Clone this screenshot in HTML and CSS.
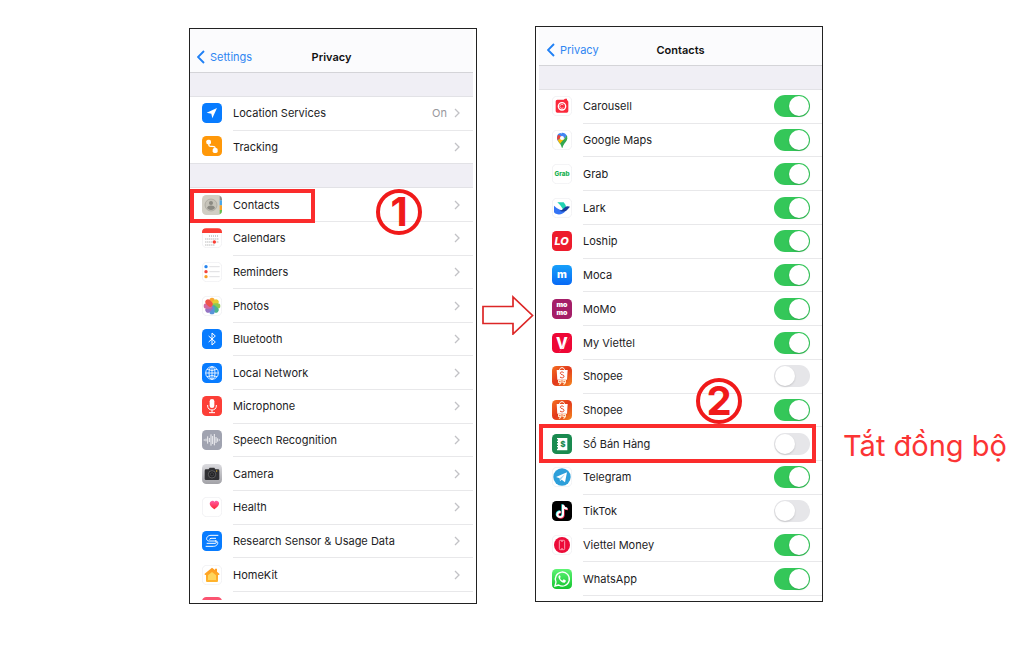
FILE: index.html
```html
<!DOCTYPE html>
<html lang="vi">
<head>
  <meta charset="UTF-8" />
  <meta name="viewport" content="width=device-width, initial-scale=1" />
  <title>Tắt đồng bộ danh bạ</title>
  <link rel="stylesheet" href="styles.css">
</head>
<body>

  <!-- Shared shapes -->
  <svg class="defs" width="0" height="0" aria-hidden="true">
    <defs>
      <linearGradient id="shopeeBg" x1="0" y1="0" x2="1" y2="1">
        <stop offset="0" stop-color="#f5701f" /><stop offset="0.5" stop-color="#e2381c" /><stop offset="1" stop-color="#f58a20" />
      </linearGradient>
      <linearGradient id="grayBg" x1="0" y1="0" x2="0" y2="1">
        <stop offset="0" stop-color="#dcdce0" /><stop offset="1" stop-color="#a2a2a7" />
      </linearGradient>
      <linearGradient id="mocaBg" x1="0" y1="0" x2="0" y2="1">
        <stop offset="0" stop-color="#17a0fa" /><stop offset="1" stop-color="#0869f5" />
      </linearGradient>
      <linearGradient id="waBg" x1="0" y1="0" x2="0" y2="1">
        <stop offset="0" stop-color="#5ff475" /><stop offset="1" stop-color="#13c42e" />
      </linearGradient>
      <linearGradient id="heart" x1="0" y1="0" x2="0" y2="1">
        <stop offset="0" stop-color="#ff5fa8" /><stop offset="1" stop-color="#ff2432" />
      </linearGradient>
      <linearGradient id="home" x1="0" y1="0" x2="0" y2="1">
        <stop offset="0" stop-color="#ff9a1f" /><stop offset="1" stop-color="#ffb52e" />
      </linearGradient>
    </defs>
    <symbol id="chevron" viewBox="0 0 6 10">
      <path d="M1 1l4 4-4 4" fill="none" stroke="#c2c2c6" stroke-width="1.3" />
    </symbol>
    <symbol id="back" viewBox="0 0 9 14">
      <path d="M7 1L1 7l6 6" fill="none" stroke="#2080f5" stroke-width="1.9" />
    </symbol>
    <symbol id="plate" viewBox="0 0 60 60">
      <rect x="1" y="1" width="58" height="58" rx="13" fill="#fff" stroke="#ececee" stroke-width="2" />
    </symbol>
    <symbol id="shopee" viewBox="0 0 60 60">
      <rect width="60" height="60" rx="13" fill="url(#shopeeBg)" />
      <path d="M22 14c0-12 16-12 16 0" fill="none" stroke="#fff" stroke-width="3" />
      <path d="M14 12h33l-2 29H16z" fill="#fff" />
      <path d="M35 20c-4-4-11-2-10 2 1 5 11 3 11 9 0 5-8 6-12 2" fill="none" stroke="#e8401f" stroke-width="3" />
      <path d="M18 42h11v8l-5 6h-4l3-5h-5zm13 0h11v8l-5 6h-4l3-5h-5z" fill="#ffe6c9" />
      <path d="M22 45h3v3h-3zm13 0h3v3h-3z" fill="#e8401f" />
    </symbol>
  </svg>

  <main class="guide">

    <section class="phone phone-privacy">
      <header class="bar">
        <a href="#" class="back"><svg width="9" height="14"><use href="#back" /></svg>Settings</a>
        <h1>Privacy</h1>
      </header>
      <ul class="list">
        <li class="spacer"></li>
        <li class="row"><a href="#">
          <svg class="icon" viewBox="0 0 60 60"><rect width="60" height="60" rx="13" fill="#087cff" /><path d="M45 15L31 46l-3-14-14-3z" fill="#fff" /></svg>
          <span class="body"><span class="label">Location Services</span><span class="value">On</span><svg class="chevron"><use href="#chevron" /></svg></span>
        </a></li>
        <li class="row last"><a href="#">
          <svg class="icon" viewBox="0 0 60 60"><rect width="60" height="60" rx="13" fill="#ff9809" /><path d="M20 18c0 15 2 13 10 13s10 0 10 13" fill="none" stroke="#fff" stroke-width="4" /><rect x="13" y="11" width="14" height="14" rx="5" fill="#fff" /><rect x="32" y="36" width="15" height="15" rx="5" fill="#fff" /></svg>
          <span class="body"><span class="label">Tracking</span><svg class="chevron"><use href="#chevron" /></svg></span>
        </a></li>
        <li class="spacer"></li>
        <li class="row marked"><a href="#">
          <svg class="icon" viewBox="0 0 60 60"><rect width="60" height="60" rx="13" fill="#d1cec4" /><path d="M53 2q7 4 7 11v3h-7z" fill="#8d8d8d" /><path d="M53 16h7v15h-7z" fill="#4aa7e8" /><path d="M53 31h7v14h-7z" fill="#f5a22c" /><path d="M53 45h7v3q0 7-7 10z" fill="#67bd4d" /><circle cx="27" cy="30" r="18" fill="#c6c3b9" stroke="#a5a299" stroke-width="2" /><circle cx="27" cy="24" r="6" fill="#8b8982" /><path d="M15 39c2-10 22-10 24 0-6 8-18 8-24 0z" fill="#8b8982" /></svg>
          <span class="body"><span class="label">Contacts</span><svg class="chevron"><use href="#chevron" /></svg></span>
        </a></li>
        <li class="row"><a href="#">
          <svg class="icon" viewBox="0 0 60 60"><use href="#plate" /><path d="M0 15V13Q0 1 13 1h34q13 0 13 12v2z" fill="#fb3d34" /><path d="M21 24h30M10 33h42M10 42h42M10 51h30" fill="none" stroke="#666" stroke-width="2" stroke-dasharray="3 3" /><circle cx="37" cy="42" r="5" fill="#fb3d34" /></svg>
          <span class="body"><span class="label">Calendars</span><svg class="chevron"><use href="#chevron" /></svg></span>
        </a></li>
        <li class="row"><a href="#">
          <svg class="icon" viewBox="0 0 60 60"><use href="#plate" /><circle cx="12" cy="14" r="5" fill="#2584ee" /><circle cx="12" cy="29" r="5" fill="#f3453c" /><circle cx="12" cy="44" r="5" fill="#f8a128" /><path d="M22 14h31M22 29h31M22 44h31" stroke="#cfcfd2" stroke-width="2" /></svg>
          <span class="body"><span class="label">Reminders</span><svg class="chevron"><use href="#chevron" /></svg></span>
        </a></li>
        <li class="row"><a href="#">
          <svg class="icon" viewBox="0 0 60 60"><use href="#plate" />
            <g opacity="0.9">
              <rect x="22" y="5" width="16" height="25" rx="8" fill="#f9a01f" />
              <rect x="22" y="5" width="16" height="25" rx="8" fill="#e3c91d" transform="rotate(45 30 30)" />
              <rect x="22" y="5" width="16" height="25" rx="8" fill="#83c341" transform="rotate(90 30 30)" />
              <rect x="22" y="5" width="16" height="25" rx="8" fill="#38ad83" transform="rotate(135 30 30)" />
              <rect x="22" y="5" width="16" height="25" rx="8" fill="#4688d8" transform="rotate(180 30 30)" />
              <rect x="22" y="5" width="16" height="25" rx="8" fill="#8a65bd" transform="rotate(225 30 30)" />
              <rect x="22" y="5" width="16" height="25" rx="8" fill="#cf5b99" transform="rotate(270 30 30)" />
              <rect x="22" y="5" width="16" height="25" rx="8" fill="#ee4338" transform="rotate(315 30 30)" />
            </g>
          </svg>
          <span class="body"><span class="label">Photos</span><svg class="chevron"><use href="#chevron" /></svg></span>
        </a></li>
        <li class="row"><a href="#">
          <svg class="icon" viewBox="0 0 60 60"><rect width="60" height="60" rx="13" fill="#087cff" /><path d="M20 21l20 18-10 9V12l10 9-20 18" fill="none" stroke="#fff" stroke-width="3" /></svg>
          <span class="body"><span class="label">Bluetooth</span><svg class="chevron"><use href="#chevron" /></svg></span>
        </a></li>
        <li class="row"><a href="#">
          <svg class="icon" viewBox="0 0 60 60"><rect width="60" height="60" rx="13" fill="#087cff" /><g fill="none" stroke="#fff" stroke-width="2.5"><circle cx="30" cy="30" r="19" /><ellipse cx="30" cy="30" rx="9" ry="19" /><path d="M11 30h38M30 11v38M15 19q15 7 30 0M15 41q15-7 30 0" /></g></svg>
          <span class="body"><span class="label">Local Network</span><svg class="chevron"><use href="#chevron" /></svg></span>
        </a></li>
        <li class="row"><a href="#">
          <svg class="icon" viewBox="0 0 60 60"><rect width="60" height="60" rx="13" fill="#fc3f37" /><rect x="23" y="9" width="14" height="27" rx="7" fill="#fff" /><path d="M17 27v3c0 16 26 16 26 0v-3M30 42v8M21 50h18" fill="none" stroke="#fff" stroke-width="3" /></svg>
          <span class="body"><span class="label">Microphone</span><svg class="chevron"><use href="#chevron" /></svg></span>
        </a></li>
        <li class="row"><a href="#">
          <svg class="icon" viewBox="0 0 60 60"><rect width="60" height="60" rx="13" fill="#a0a3b0" /><path d="M5 30h4M12 26v8M17 19v22M22 24v12M27 13v34M32 18v24M37 12v34M42 21v18M47 25v10M52 28v4" stroke="#fff" stroke-width="2.5" /></svg>
          <span class="body"><span class="label">Speech Recognition</span><svg class="chevron"><use href="#chevron" /></svg></span>
        </a></li>
        <li class="row"><a href="#">
          <svg class="icon" viewBox="0 0 60 60"><rect width="60" height="60" rx="13" fill="url(#grayBg)" /><path d="M8 20q0-4 4-4h8l3-5h14l3 5h8q4 0 4 4v24q0 4-4 4H12q-4 0-4-4z" fill="#303033" /><circle cx="30" cy="31" r="11" fill="#202023" stroke="#777" stroke-width="2" /><circle cx="30" cy="31" r="5" fill="none" stroke="#555" stroke-width="2" /><circle cx="44" cy="21" r="2" fill="#e2b52d" /></svg>
          <span class="body"><span class="label">Camera</span><svg class="chevron"><use href="#chevron" /></svg></span>
        </a></li>
        <li class="row"><a href="#">
          <svg class="icon" viewBox="0 0 60 60"><use href="#plate" /><path d="M37 37C15 22 24 11 32 11q4 0 5 4 1-4 6-4c8 0 16 11-6 26z" fill="url(#heart)" /></svg>
          <span class="body"><span class="label">Health</span><svg class="chevron"><use href="#chevron" /></svg></span>
        </a></li>
        <li class="row"><a href="#">
          <svg class="icon" viewBox="0 0 60 60"><rect width="60" height="60" rx="13" fill="#087cff" /><g fill="none" stroke="#fff" stroke-width="3"><path d="M49 13H27c-15 0-18 17-5 17h17c6 0 6 7 0 7H14" /><path d="M42 22H27q-4 0-4 4M11 46h23c15 0 18-17 5-17" /></g></svg>
          <span class="body"><span class="label">Research Sensor &amp; Usage Data</span><svg class="chevron"><use href="#chevron" /></svg></span>
        </a></li>
        <li class="row"><a href="#">
          <svg class="icon" viewBox="0 0 60 60"><use href="#plate" /><path d="M30 8l9 7v-4h6v9l7 6q2 4-3 4h-1v18q0 3-3 3H15q-3 0-3-3V30h-1q-5 0-3-4z" fill="url(#home)" /><path d="M30 21l12 10v14H18V31z" fill="#ffd55c" /></svg>
          <span class="body"><span class="label">HomeKit</span><svg class="chevron"><use href="#chevron" /></svg></span>
        </a></li>
        <li class="peek"><svg class="icon" viewBox="0 0 60 60"><rect width="60" height="60" rx="13" fill="#fb5471" /></svg></li>
      </ul>
      <span class="step step-one">1</span>
    </section>

    <svg class="arrow" width="54" height="40" viewBox="0 0 54 40" aria-hidden="true">
      <path d="M2 11.500H32V2L51.500 20.500 32 39V28.500H2z" fill="#fff" stroke="#dc2626" stroke-width="1.700" />
    </svg>

    <section class="phone phone-contacts">
      <header class="bar">
        <a href="#" class="back"><svg width="9" height="14"><use href="#back" /></svg>Privacy</a>
        <h1>Contacts</h1>
      </header>
      <ul class="list">
        <li class="spacer"></li>
        <li class="row"><label>
          <svg class="icon" viewBox="0 0 60 60"><use href="#plate" /><path d="M16 11h19l4-3h6v5q4 1 4 5v27q0 5-5 5H16q-5 0-5-5V16q0-5 5-5z" fill="#fb283b" /><circle cx="30" cy="31" r="11" fill="none" stroke="#fff" stroke-width="4" /><path d="M34 27a6 6 0 1 0 0 8" fill="none" stroke="#ffc3c7" stroke-width="3" /></svg>
          <span class="body"><span class="label">Carousell</span><input type="checkbox" class="switch" checked></span>
        </label></li>
        <li class="row"><label>
          <svg class="icon" viewBox="0 0 60 60"><use href="#plate" /><path d="M19 35c4 5 8 8 10 17 0 3 3 3 3 0 2-11 13-16 14-28z" fill="#34a853" /><path d="M15 21q-1 8 5 15l18-20-13-7Q16 11 15 21z" fill="#4285f4" /><path d="M18 14q-5 8-1 17l12-12z" fill="#ea4335" /><path d="M17 31l7 10 20-24-14 5z" fill="#fbbc04" /><path d="M44 15q5 10-3 18L30 46q2-12 14-31z" fill="#34a853" /><path d="M29 8q11-1 15 9l-9 10-7-10z" fill="#4285f4" /><circle cx="30" cy="24" r="6" fill="#fff" /></svg>
          <span class="body"><span class="label">Google Maps</span><input type="checkbox" class="switch" checked></span>
        </label></li>
        <li class="row"><label>
          <svg class="icon" viewBox="0 0 60 60" aria-hidden="true"><use href="#plate" /><text class="logo-text" x="30" y="37" font-size="19" fill="#16b150">Grab</text></svg>
          <span class="body"><span class="label">Grab</span><input type="checkbox" class="switch" checked></span>
        </label></li>
        <li class="row"><label>
          <svg class="icon" viewBox="0 0 60 60"><use href="#plate" /><path d="M16 13h19q7 7 7 16l-9 5Q26 21 16 13z" fill="#20d2b2" /><path d="M6 23q15 15 35 15Q31 51 17 49 8 47 6 43z" fill="#3474f5" /><path d="M54 26q-9-4-17 3-7 8-14 9 17 7 25-5z" fill="#153c9c" /></svg>
          <span class="body"><span class="label">Lark</span><input type="checkbox" class="switch" checked></span>
        </label></li>
        <li class="row"><label>
          <svg class="icon" viewBox="0 0 60 60" aria-hidden="true"><rect width="60" height="60" rx="13" fill="#ed1c2c" /><text class="logo-text slanted" x="29" y="43" font-size="33" fill="#fff">LO</text></svg>
          <span class="body"><span class="label">Loship</span><input type="checkbox" class="switch" checked></span>
        </label></li>
        <li class="row"><label>
          <svg class="icon" viewBox="0 0 60 60" aria-hidden="true"><rect width="60" height="60" rx="13" fill="url(#mocaBg)" /><text class="logo-text" x="30" y="39" font-size="32" fill="#fff">m</text></svg>
          <span class="body"><span class="label">Moca</span><input type="checkbox" class="switch" checked></span>
        </label></li>
        <li class="row"><label>
          <svg class="icon" viewBox="0 0 60 60" aria-hidden="true"><rect width="60" height="60" rx="13" fill="#a51e68" /><text class="logo-text heavy" x="30" y="23" font-size="21" fill="#fff">mo</text><text class="logo-text heavy" x="30" y="49" font-size="21" fill="#fff">mo</text></svg>
          <span class="body"><span class="label">MoMo</span><input type="checkbox" class="switch" checked></span>
        </label></li>
        <li class="row"><label>
          <svg class="icon" viewBox="0 0 60 60" aria-hidden="true"><rect width="60" height="60" rx="13" fill="#ee0735" /><text class="logo-text" x="30" y="47" font-size="46" fill="#fff">V</text><path d="M22 57l33-45" stroke="#ff7b93" stroke-width="1" /></svg>
          <span class="body"><span class="label">My Viettel</span><input type="checkbox" class="switch" checked></span>
        </label></li>
        <li class="row"><label>
          <svg class="icon"><use href="#shopee" /></svg>
          <span class="body"><span class="label">Shopee</span><input type="checkbox" class="switch"></span>
        </label></li>
        <li class="row"><label>
          <svg class="icon"><use href="#shopee" /></svg>
          <span class="body"><span class="label">Shopee</span><input type="checkbox" class="switch" checked></span>
        </label></li>
        <li class="row marked"><label>
          <svg class="icon" viewBox="0 0 60 60" aria-hidden="true"><rect width="60" height="60" rx="13" fill="#1a8a50" /><path d="M15 12h31v37H15v-5h3v-4h-3v-4h3v-4h-3v-4h3v-4h-3v-4h3v-4h-3z" fill="#fff" /><text class="logo-text" x="33" y="39" font-size="24" fill="#1a8a50">$</text></svg>
          <span class="body"><span class="label">Sổ Bán Hàng</span><input type="checkbox" class="switch"></span>
        </label></li>
        <li class="row"><label>
          <svg class="icon" viewBox="0 0 60 60"><use href="#plate" /><circle cx="30" cy="30" r="26" fill="#2d9fda" /><path d="M12 30l33-14-6 30-10-8-5 5-1-9z" fill="#fff" /><path d="M23 34l16-12-11 14-3 6z" fill="#9fd2ee" /></svg>
          <span class="body"><span class="label">Telegram</span><input type="checkbox" class="switch" checked></span>
        </label></li>
        <li class="row"><label>
          <svg class="icon" viewBox="0 0 60 60"><rect width="60" height="60" rx="13" fill="#000" /><g fill="none" stroke-width="6"><path d="M31 10v29c0 12-18 10-17 0q1-8 10-8M31 12q3 10 13 10" stroke="#25e4df" /><path d="M35 13v29c0 12-18 10-17 0q1-8 10-8M35 15q3 10 13 10" stroke="#fa2b55" /><path d="M33 11v29c0 12-18 10-17 0q1-8 10-8M33 13q3 10 13 10" stroke="#fff" /></g></svg>
          <span class="body"><span class="label">TikTok</span><input type="checkbox" class="switch"></span>
        </label></li>
        <li class="row"><label>
          <svg class="icon" viewBox="0 0 60 60"><use href="#plate" /><circle cx="30" cy="30" r="24" fill="#ec0b38" /><rect x="22" y="16" width="16" height="28" rx="3" fill="none" stroke="#ffb8c5" stroke-width="2.5" /><path d="M27 19h6M27 41h6" stroke="#ffb8c5" stroke-width="2" /></svg>
          <span class="body"><span class="label">Viettel Money</span><input type="checkbox" class="switch" checked></span>
        </label></li>
        <li class="row"><label>
          <svg class="icon" viewBox="0 0 60 60"><rect width="60" height="60" rx="13" fill="url(#waBg)" /><path d="M9 51l3-12a21 21 0 1 1 8 9z" fill="none" stroke="#fff" stroke-width="4" /><path d="M23 19q-6 3-2 10 7 13 17 12 5-3 3-7l-6-3-4 4q-6-3-7-8l2-3-2-5z" fill="#fff" /></svg>
          <span class="body"><span class="label">WhatsApp</span><input type="checkbox" class="switch" checked></span>
        </label></li>
      </ul>
      <span class="step step-two">2</span>
    </section>

    <p class="caption">Tắt đồng bộ</p>

  </main>

</body>
</html>
```
FILE: styles.css
```css
*,
*::before,
*::after {
  box-sizing: border-box;
}

body {
  margin: 0;
  background-color: #fff;
  color: #1c1c1e;
  font-family: Inter, "Liberation Sans", sans-serif;
  font-size: 11px;
  line-height: 16px;
}

a {
  color: inherit;
  text-decoration: none;
}

.defs {
  position: absolute;
}

.guide {
  display: grid;
  grid-template-columns: 1fr 58px 1fr 201px;
  min-height: 100vh;
  padding: 26px 0 43px 189px;
}

/* Phone frames */
.phone {
  position: relative;
  display: flex;
  flex-direction: column;
  border: 1px solid #222;
  background-color: #fff;
}

.phone-privacy {
  margin-top: 2px;
  padding: 0 3px 3px 0;
}

.phone-contacts {
  margin-bottom: 2px;
  padding: 0 0 5px 3px;
}

.bar {
  display: grid;
  grid-template-columns: 1fr auto 1fr;
  align-items: center;
  height: 44px;
  padding: 13px 7px 0;
  border-bottom: 1px solid #d4d4d8;
  background-color: #fbfbfd;
}

.phone-contacts .bar {
  height: 39px;
  padding: 8px 8px 0;
}

.bar h1 {
  margin: 0;
  font-size: 11px;
  font-weight: 600;
  color: #111;
}

.back {
  display: flex;
  align-items: center;
  gap: 4px;
  color: #2f86f2;
}

/* Lists */
.list {
  display: flex;
  flex-direction: column;
  flex: 1;
  margin: 0;
  padding: 0;
  list-style: none;
}

.spacer {
  height: 24px;
  border-bottom: 1px solid #e2e2e6;
  background-color: #f0eff5;
}

.row {
  position: relative;
  display: flex;
  flex: 1 0 32px;
}

.row a,
.row label {
  display: flex;
  flex: 1;
  align-items: center;
  gap: 11px;
  padding-left: 12px;
}

.phone-contacts .row label {
  padding-left: 13px;
}

.icon {
  flex: none;
  width: 20px;
  height: 20px;
  margin-bottom: 1px;
}

.body {
  display: flex;
  flex: 1;
  align-items: center;
  align-self: stretch;
  gap: 7px;
  padding-right: 13px;
  border-bottom: 1px solid #e8e8ea;
}

.phone-contacts .body {
  padding-right: 12px;
}

/* The last row of a group is ruled over its full width */
.row.last {
  border-bottom: 1px solid #e2e2e6;
}

.row.last .body {
  border-bottom: none;
}

.label {
  flex: 1;
}

.value {
  color: #98989d;
}

.chevron {
  width: 6px;
  height: 10px;
}

.peek {
  height: 8px;
  padding: 5px 12px 0;
  overflow: hidden;
}

.logo-text {
  font-weight: 800;
  text-anchor: middle;
}

.heavy {
  font-weight: 900;
}

.slanted {
  font-style: italic;
}

/* Switches */
.switch {
  appearance: none;
  display: flex;
  width: 36px;
  height: 22px;
  margin: 0;
  padding: 1px;
  border-radius: 11px;
  background-color: #e6e6e9;
}

.switch::before {
  content: "";
  width: 20px;
  height: 20px;
  border-radius: 50%;
  background-color: #fff;
  box-shadow: 0 1px 2px rgba(0,0,0,0.15);
}

.switch:checked {
  justify-content: flex-end;
  background-color: #34c759;
}

/* Red markers on top of the phones */
.marked::after {
  content: "";
  position: absolute;
  top: 1px;
  bottom: -1px;
  left: 0;
  width: 125px;
  border: 4px solid #fb2c2c;
  pointer-events: none;
}

.phone-contacts .marked::after {
  top: -3px;
  bottom: -2px;
  right: 6px;
  width: auto;
}

.step {
  position: absolute;
  display: flex;
  align-items: center;
  justify-content: center;
  width: 46px;
  height: 46px;
  border: 4px solid #f01a1a;
  border-radius: 50%;
  color: #f01a1a;
  font-size: 40px;
  font-weight: 700;
}

.step-one {
  top: 160px;
  right: 54px;
}

.step-two {
  top: 351px;
  right: 80px;
}

.arrow {
  align-self: center;
  justify-self: end;
}

.caption {
  align-self: end;
  margin: 0 0 140px 20px;
  color: #fb3434;
  font-size: 29px;
  line-height: 36px;
}
```
